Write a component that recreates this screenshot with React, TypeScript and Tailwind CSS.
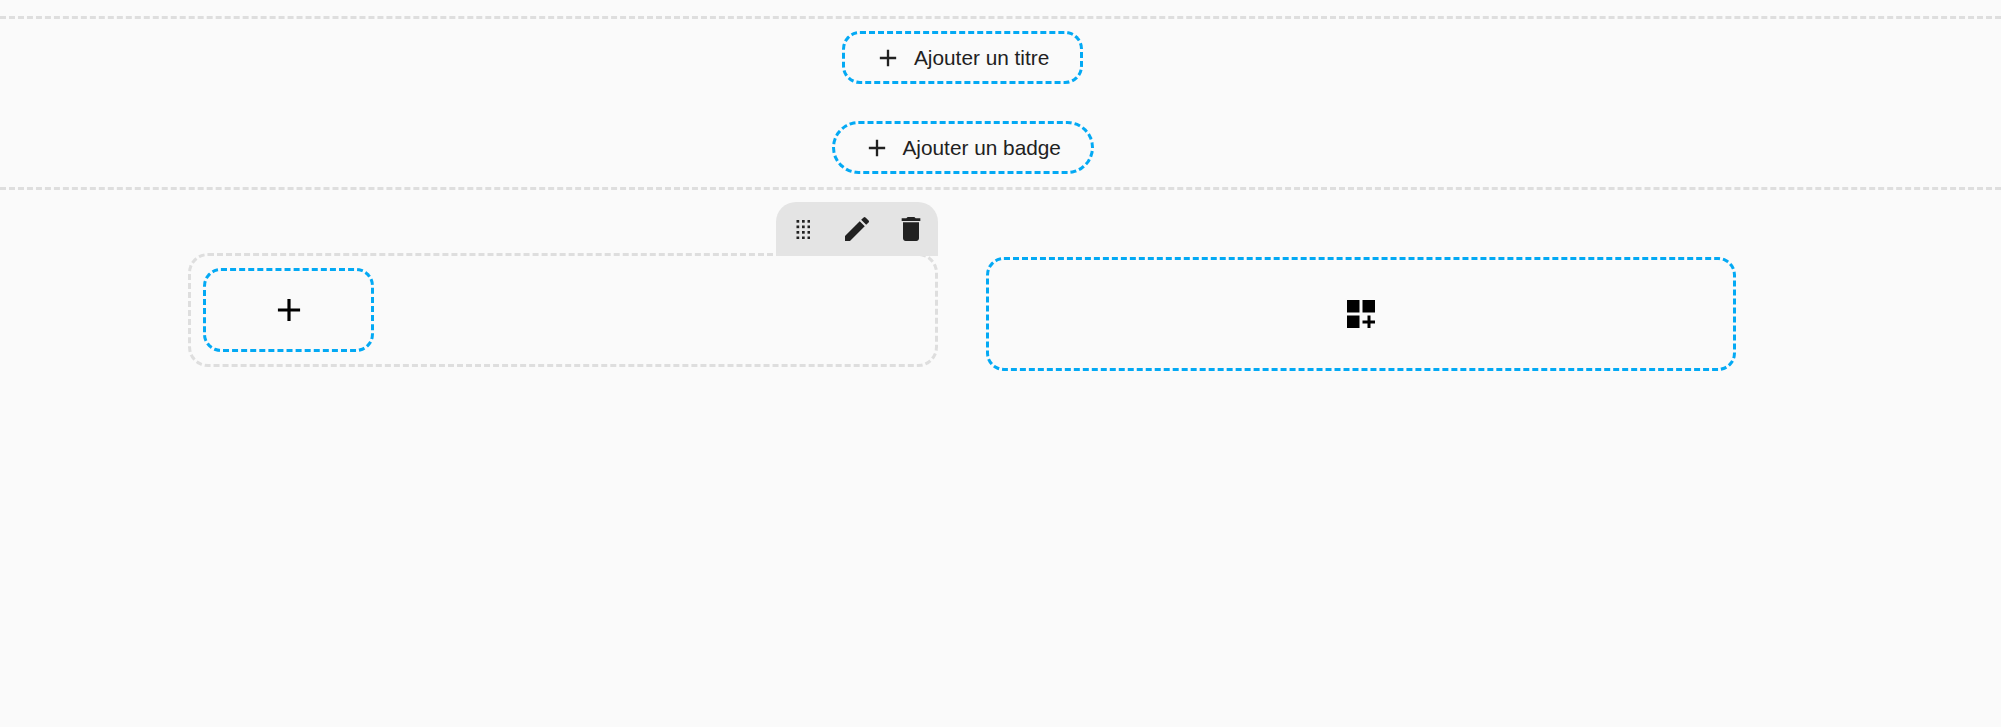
import { MdAdd, MdDelete, MdEdit } from "react-icons/md";

function AddButton({ label, className }: { label: string; className: string }) {
  return (
    <button className={`flex h-[53px] items-center border-[3px] border-dashed border-[#03a9f4] ${className}`}>
      <MdAdd size={28} className="text-[#212121]" />
      <span className="ml-[12px] text-[20.8px] text-[#212121]">{label}</span>
    </button>
  );
}

function DragDots() {
  return (
    <svg width="14" height="19" viewBox="0 0 14 19" fill="#212121">
      {[0, 5.5, 11, 16.5].map((y) =>
        [0.5, 6, 11.5].map((x) => <rect key={`${x}-${y}`} x={x} y={y} width="2.7" height="2.7" />)
      )}
    </svg>
  );
}

function WidgetPlus() {
  return (
    <svg width="28" height="28" viewBox="0 0 28 28" fill="#000">
      <rect x="0" y="0" width="12.5" height="12.5" />
      <rect x="15.5" y="0" width="12.5" height="12.5" />
      <rect x="0" y="15.5" width="12.5" height="12.5" />
      <rect x="20.5" y="15.5" width="3" height="12.5" />
      <rect x="15.5" y="20.5" width="12.5" height="3" />
    </svg>
  );
}

export default function App() {
  return (
    <div className="min-h-[727px] bg-[#fafafa] pt-4 font-['Liberation_Sans',sans-serif]">
      <section className="flex h-[174px] flex-col border-y-[3px] border-dashed border-[#dedede] pr-[76px]">
        <div className="flex flex-col items-center gap-[37px] pt-3">
          <AddButton label="Ajouter un titre" className="w-[241px] rounded-[18px] pl-[29px]" />
          <AddButton label="Ajouter un badge" className="w-[262px] rounded-[27px] pl-[28px]" />
        </div>
      </section>

      <div className="ml-[188px] mt-[63px] grid w-[1548px] grid-cols-2 gap-12">
        <div className="relative h-[114px] rounded-[20px] border-[3px] border-dashed border-[#dedede] p-3">
          <div className="absolute -top-[54px] -right-[3px] flex h-[54px] w-[162px] items-center rounded-t-[20px] bg-[#e4e4e4] text-[#212121]">
            <span className="ml-5"><DragDots /></span>
            <MdEdit size={32} className="ml-[31px]" />
            <MdDelete size={32} className="ml-[22px]" />
          </div>
          <button className="flex h-[84px] w-[171px] items-center justify-center rounded-[18px] border-[3px] border-dashed border-[#03a9f4]">
            <MdAdd size={38} className="text-black" />
          </button>
        </div>
        <button className="mt-1 flex h-[114px] items-center justify-center rounded-[18px] border-[3px] border-dashed border-[#03a9f4]">
          <WidgetPlus />
        </button>
      </div>
    </div>
  );
}
